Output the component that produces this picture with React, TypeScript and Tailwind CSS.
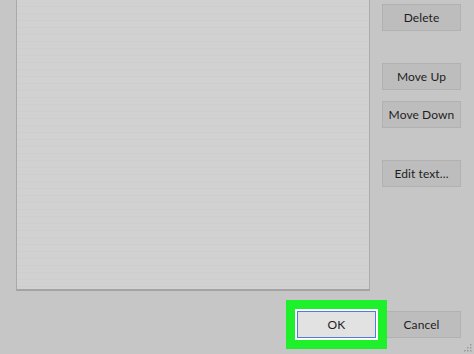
import React from "react";

function Btn({ label, className = "" }: { label: string; className?: string }) {
  return (
    <div
      className={`w-[79px] h-[27px] flex items-center justify-center pt-[1px] border border-[#b1b1b1] bg-[#bdbdbd] text-[12px] tracking-[0.1px] text-[#1e1e1e] ${className}`}
    >
      {label}
    </div>
  );
}

export default function App() {
  return (
    <div
      className="w-[474px] h-[354px] bg-[#c6c6c6] flex flex-col overflow-hidden relative"
      style={{ fontFamily: 'Lato, "Noto Sans", sans-serif' }}
    >
      <div className="flex h-[291px] pl-[16px]">
        <div className="w-[354px] h-full border-l border-r border-l-[#a9a9a9] border-r-[#adadad] border-b-2 border-b-[#a3a3a3] bg-[repeating-linear-gradient(180deg,#d1d1d1_0px,#d1d1d1_6px,#cecece_6px,#cecece_7px)]" />
        <div className="ml-[12px] flex flex-col pt-[4px]">
          <Btn label="Delete" />
          <Btn label="Move Up" className="mt-[32px]" />
          <Btn label="Move Down" className="mt-[11px]" />
          <Btn label="Edit text..." className="mt-[32px]" />
        </div>
      </div>
      <div className="flex mt-[20px] pl-[297px]">
        <div className="relative z-10 w-[79px] h-[27px] flex items-center justify-center pt-[1px] border border-[#4f7fd4] bg-[#e2e2e2] text-[12px] tracking-[0.1px] text-[#1e1e1e] shadow-[0_0_0_2px_#ffffff,0_0_0_11px_#1ef12b]">
          OK
        </div>
        <Btn label="Cancel" className="ml-[6px]" />
      </div>
      <svg className="absolute right-[2px] bottom-[2px]" width="8" height="8" viewBox="0 0 8 8">
        <rect x="6" y="0" width="1.5" height="1.5" fill="#9a9a9a" />
        <rect x="3" y="3" width="1.5" height="1.5" fill="#9a9a9a" />
        <rect x="6" y="3" width="1.5" height="1.5" fill="#9a9a9a" />
        <rect x="0" y="6" width="1.5" height="1.5" fill="#9a9a9a" />
        <rect x="3" y="6" width="1.5" height="1.5" fill="#9a9a9a" />
        <rect x="6" y="6" width="1.5" height="1.5" fill="#9a9a9a" />
      </svg>
    </div>
  );
}
